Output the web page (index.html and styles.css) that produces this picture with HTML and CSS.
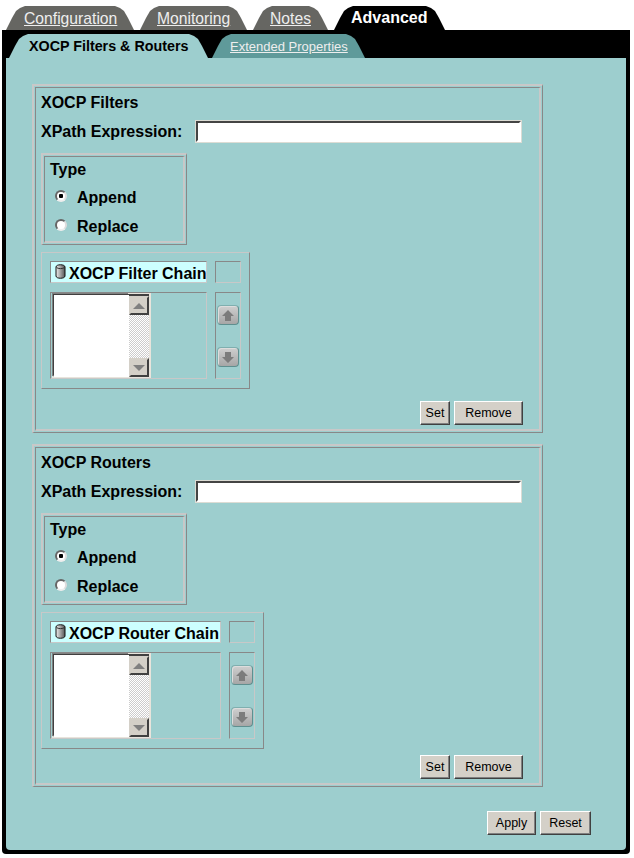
FILE: index.html
```html
<!DOCTYPE html>
<html lang="en">
<head>
    <meta charset="UTF-8">
    <title>XOCP Filters &amp; Routers</title>
    <link rel="stylesheet" href="styles.css">
</head>
<body>

<div class="main-tabs">
    <a class="main-tab tab-config" href="#">Configuration</a>
    <a class="main-tab tab-monitor" href="#">Monitoring</a>
    <a class="main-tab tab-notes" href="#">Notes</a>
    <a class="main-tab tab-advanced" href="#">Advanced</a>
</div>

<div class="panel">
    <div class="sub-tabs">
        <a class="sub-tab sub-active" href="#">XOCP Filters &amp; Routers</a>
        <a class="sub-tab sub-other" href="#">Extended Properties</a>
    </div>

    <div class="content">
        <section class="frame">
            <div class="frame-in">
                <h2 class="heading">XOCP Filters</h2>
                <div class="xpath-row">
                    <label class="xpath-label">XPath Expression:</label>
                    <input class="xpath-input" type="text">
                </div>
                <div class="frame type-frame">
                    <div class="frame-in type-in">
                        <div class="type-title">Type</div>
                        <label class="type-row"><input class="radio" type="radio" name="filter-type" checked>Append</label>
                        <label class="type-row"><input class="radio" type="radio" name="filter-type">Replace</label>
                    </div>
                </div>
                <div class="chain chain-filter">
                    <div class="chain-title">
                        <svg class="chain-icon" width="11" height="15" viewBox="0 0 11 15">
                            <defs>
                                <linearGradient id="cyl1" x1="0" x2="1" y1="0" y2="0">
                                    <stop offset="0" stop-color="#f0f0f0"/>
                                    <stop offset="1" stop-color="#555"/>
                                </linearGradient>
                            </defs>
                            <path d="M1 3 C1 0 10 0 10 3 L10 12 C10 15 1 15 1 12 Z" fill="url(#cyl1)" stroke="#111"/>
                            <path d="M1.500 3.500 C3 5 8 5 9.500 3.500" fill="none" stroke="#333"/>
                        </svg>
                        XOCP Filter Chain
                    </div>
                    <div class="cell"></div>
                    <div class="cell cell-list">
                        <div class="listbox">
                            <div class="list-area"></div>
                            <div class="scrollbar">
                                <div class="scroll-btn"><span class="tri-up"></span></div>
                                <div class="scroll-track"></div>
                                <div class="scroll-btn"><span class="tri-down"></span></div>
                            </div>
                        </div>
                    </div>
                    <div class="cell cell-move">
                        <button class="move-btn" type="button">
                            <svg width="12" height="11" viewBox="0 0 12 11"><path d="M6 0 L12 6 L9 6 L9 11 L3 11 L3 6 L0 6 Z" fill="#7c7c7c"/></svg>
                        </button>
                        <button class="move-btn" type="button">
                            <svg width="12" height="11" viewBox="0 0 12 11"><path d="M6 11 L12 5 L9 5 L9 0 L3 0 L3 5 L0 5 Z" fill="#7c7c7c"/></svg>
                        </button>
                    </div>
                </div>
                <div class="frame-buttons frame-buttons-wide">
                    <button class="btn btn-set" type="button">Set</button>
                    <button class="btn btn-remove" type="button">Remove</button>
                </div>
            </div>
        </section>

        <section class="frame frame-second">
            <div class="frame-in">
                <h2 class="heading">XOCP Routers</h2>
                <div class="xpath-row">
                    <label class="xpath-label">XPath Expression:</label>
                    <input class="xpath-input" type="text">
                </div>
                <div class="frame type-frame">
                    <div class="frame-in type-in">
                        <div class="type-title">Type</div>
                        <label class="type-row"><input class="radio" type="radio" name="router-type" checked>Append</label>
                        <label class="type-row"><input class="radio" type="radio" name="router-type">Replace</label>
                    </div>
                </div>
                <div class="chain chain-router">
                    <div class="chain-title">
                        <svg class="chain-icon" width="11" height="15" viewBox="0 0 11 15">
                            <path d="M1 3 C1 0 10 0 10 3 L10 12 C10 15 1 15 1 12 Z" fill="url(#cyl1)" stroke="#111"/>
                            <path d="M1.500 3.500 C3 5 8 5 9.500 3.500" fill="none" stroke="#333"/>
                        </svg>
                        XOCP Router Chain
                    </div>
                    <div class="cell"></div>
                    <div class="cell cell-list">
                        <div class="listbox">
                            <div class="list-area"></div>
                            <div class="scrollbar">
                                <div class="scroll-btn"><span class="tri-up"></span></div>
                                <div class="scroll-track"></div>
                                <div class="scroll-btn"><span class="tri-down"></span></div>
                            </div>
                        </div>
                    </div>
                    <div class="cell cell-move">
                        <button class="move-btn" type="button">
                            <svg width="12" height="11" viewBox="0 0 12 11"><path d="M6 0 L12 6 L9 6 L9 11 L3 11 L3 6 L0 6 Z" fill="#7c7c7c"/></svg>
                        </button>
                        <button class="move-btn" type="button">
                            <svg width="12" height="11" viewBox="0 0 12 11"><path d="M6 11 L12 5 L9 5 L9 0 L3 0 L3 5 L0 5 Z" fill="#7c7c7c"/></svg>
                        </button>
                    </div>
                </div>
                <div class="frame-buttons">
                    <button class="btn btn-set" type="button">Set</button>
                    <button class="btn btn-remove" type="button">Remove</button>
                </div>
            </div>
        </section>

        <div class="page-buttons">
            <button class="btn btn-apply" type="button">Apply</button>
            <button class="btn btn-reset" type="button">Reset</button>
        </div>
    </div>
</div>

</body>
</html>
```

FILE: styles.css
```css
body {
    margin: 0;
    background-color: #fff;
    font-family: "Liberation Sans", Arial, sans-serif;
    color: #000;
}

/* top tabs */
.main-tabs {
    display: flex;
    gap: 6px;
    height: 24px;
    margin: 6px 0 0 6px;
}

.main-tab,
.sub-tab {
    height: 24px;
    box-sizing: border-box;
    clip-path: polygon(0 100%, 3px 18px, 6px 12px, 10px 5px, 14px 2px, 19px 0,
        calc(100% - 19px) 0, calc(100% - 14px) 2px, calc(100% - 10px) 5px,
        calc(100% - 6px) 12px, calc(100% - 3px) 18px, 100% 100%);
}

.main-tab {
    line-height: 25px;
    font-size: 15.700px;
    color: #eee;
    background-color: #666662;
}

.tab-config { width: 128px; padding-left: 18px; }
.tab-monitor { width: 107px; padding-left: 17px; }
.tab-notes { width: 75px; padding-left: 17px; }

.tab-advanced {
    width: 111px;
    padding-left: 17px;
    line-height: 23px;
    font-size: 16px;
    font-weight: bold;
    color: #fff;
    background-color: #000;
    text-decoration: none;
}

/* black panel */
.panel {
    width: 620px;
    margin-left: 2px;
    padding: 4px;
    background-color: #000;
    border-radius: 0 0 4px 4px;
}

.sub-tabs {
    display: flex;
    gap: 4px;
    height: 24px;
    padding-left: 3px;
}

.sub-tab {
    line-height: 25px;
}

.sub-active {
    width: 199px;
    padding-left: 20px;
    font-size: 14.300px;
    font-weight: bold;
    color: #000;
    background-color: #9dcece;
    text-decoration: none;
}

.sub-other {
    width: 153px;
    padding-left: 18px;
    font-size: 13px;
    color: #eee;
    background-color: #5f9a9a;
}

.content {
    height: 792px;
    box-sizing: border-box;
    padding: 26px 0 0 26px;
    background-color: #9dcece;
    border-radius: 0 0 4px 4px;
}

/* group frames: light then dark at top left, light then dark going out at bottom right */
.frame {
    width: 511px;
    box-sizing: border-box;
    padding: 1px;
    border-style: solid;
    border-width: 2px 1px 1px 2px;
    border-color: #c8c8c8 #888 #888 #c8c8c8;
}

.frame-second {
    margin-top: 11px;
}

.frame-in {
    padding: 5px 0 4px 5px;
    border-style: solid;
    border-width: 1px 2px 2px 1px;
    border-color: #888 #c8c8c8 #c8c8c8 #888;
}

.heading {
    height: 20px;
    margin: 0;
    font-size: 16px;
    line-height: 20px;
    font-weight: bold;
}

.xpath-row {
    display: flex;
    align-items: center;
    height: 23px;
    margin-top: 7px;
}

.xpath-label {
    width: 154px;
    font-size: 16px;
    font-weight: bold;
}

.xpath-input {
    width: 325px;
    height: 21px;
    box-sizing: border-box;
    margin: 1px;
    padding: 0;
    background-color: #fff;
    border: 2px solid;
    border-color: #444 #fff #fff #444;
    box-shadow: 0 0 0 1px #dcdcd4;
    outline: none;
}

.type-frame {
    width: 146px;
    height: 92px;
    margin-top: 10px;
}

.type-in {
    height: 100%;
    box-sizing: border-box;
    padding: 3px 0 0 5px;
}

.type-title {
    height: 23px;
    font-size: 16px;
    line-height: 20px;
    font-weight: bold;
}

.type-row {
    display: flex;
    align-items: center;
    height: 29px;
    font-size: 16px;
    font-weight: bold;
}

.radio {
    appearance: none;
    flex: none;
    width: 12px;
    height: 12px;
    box-sizing: border-box;
    margin: -3px 10px 0 5px;
    border: 2px solid;
    border-color: #666 #ddd #eee #666;
    border-radius: 50%;
    background-color: #fff;
}

.radio:checked {
    background: radial-gradient(circle, #000 0 2px, #fff 2.500px);
}

/* chain boxes */
.chain {
    display: grid;
    grid-template-rows: 22px 87px;
    gap: 9px 8px;
    width: max-content;
    margin-top: 7px;
    padding: 8px 8px 9px;
    border: 1px solid;
    border-color: #c8c8c8 #888 #888 #c8c8c8;
}

.chain-filter { grid-template-columns: 157px 26px; }
.chain-router { grid-template-columns: 171px 26px; }

.chain-title {
    display: flex;
    align-items: center;
    gap: 3px;
    box-sizing: border-box;
    padding: 4px 0 0 4px;
    overflow: hidden;
    white-space: nowrap;
    font-size: 16px;
    font-weight: bold;
    background-color: #ccffff;
    border: 1px solid;
    border-color: #888 #c8c8c8 #c8c8c8 #888;
}

.chain-icon {
    flex: none;
    margin-top: -6px;
}

.cell {
    box-sizing: border-box;
    border: 1px solid;
    border-color: #888 #c8c8c8 #c8c8c8 #888;
}

.cell-list {
    padding-left: 1px;
}

.cell-move {
    display: flex;
    flex-direction: column;
    align-items: center;
    gap: 22px;
    padding-top: 12px;
}

.move-btn {
    display: flex;
    align-items: center;
    justify-content: center;
    width: 22px;
    height: 20px;
    padding: 0;
    border: 1px solid;
    border-color: #7fafaf #5f8f8f #5f8f8f #7fafaf;
    border-radius: 4px;
    background: linear-gradient(#cfcfcf, #a6a6a6);
    box-shadow: inset 1px 1px 0 #ddd;
}

.listbox {
    display: flex;
    width: 99px;
    height: 85px;
    box-sizing: border-box;
    background-color: #e8e4dc;
    padding-right: 2px;
    padding-bottom: 1px;
}

.list-area {
    flex: 1;
    background-color: #fff;
    border-style: solid;
    border-width: 1px 0 2px 1px;
    border-color: #404040 #fff #fff #404040;
    box-shadow: -1px -1px 0 #808080;
    margin: 1px 0 0 1px;
}

.scrollbar {
    display: flex;
    flex-direction: column;
    width: 20px;
    margin: 1px 0 0;
    border-top: 2px solid #404040;
}

.scroll-btn {
    display: flex;
    align-items: center;
    justify-content: center;
    height: 19px;
    box-sizing: border-box;
    background-color: #d4d0c8;
    border: 2px solid;
    border-color: #d4d0c8 #404040 #404040 #d4d0c8;
}

.scroll-track {
    flex: 1;
    background-image: repeating-conic-gradient(#ccc 0 25%, #fff 0 50%);
    background-size: 2px 2px;
}

.tri-up {
    border: 6px solid transparent;
    border-top: 0;
    border-bottom: 6px solid #808080;
}

.tri-down {
    border: 6px solid transparent;
    border-bottom: 0;
    border-top: 6px solid #808080;
}

/* plain buttons */
.btn {
    height: 24px;
    box-sizing: border-box;
    padding: 0;
    font-family: "Liberation Sans", Arial, sans-serif;
    font-size: 12.500px;
    color: #000;
    background-color: #d4d0c8;
    border: 1px solid;
    border-color: #fff #404040 #404040 #fff;
    box-shadow: inset -1px -1px 0 #808080;
}

.btn-set { width: 30px; }
.btn-remove { width: 69px; }
.btn-apply { width: 49px; }
.btn-reset { width: 51px; }

.frame-buttons {
    display: flex;
    justify-content: flex-end;
    gap: 4px;
    margin-top: 6px;
    padding-right: 16px;
}

.frame-buttons-wide {
    margin-top: 12px;
}

.page-buttons {
    display: flex;
    gap: 4px;
    margin: 24px 0 0 455px;
}
```
